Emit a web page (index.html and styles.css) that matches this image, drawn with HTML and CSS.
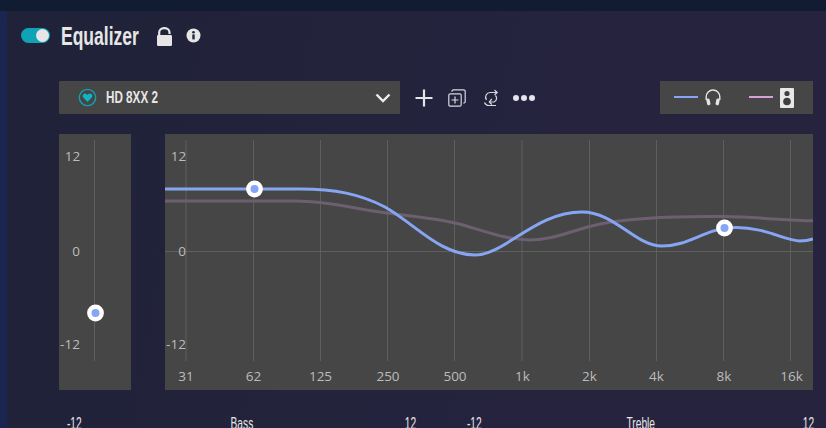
FILE: index.html
```html
<!DOCTYPE html>
<html lang="en">
<head>
    <meta charset="UTF-8">
    <meta name="viewport" content="width=device-width, initial-scale=1.0">
    <title>Equalizer</title>
    <link rel="stylesheet" href="styles.css">
</head>
<body>
    <div class="topbar"></div>
    <div class="page">
        <div class="header">
            <div class="toggle"><span class="toggle-knob"></span></div>
            <h1 class="title">Equalizer</h1>
            <svg class="lock-icon" width="17" height="19" viewBox="0 0 17 19">
                <path d="M3.200 9V5.500a5 4.300 0 0 1 10.300 0V7" fill="none" stroke="#e6e6e6" stroke-width="2.200"/>
                <rect x="1" y="8" width="15" height="11" rx="1.200" fill="#e6e6e6"/>
            </svg>
            <svg class="info-icon" width="15" height="15" viewBox="0 0 15 15">
                <circle cx="7.500" cy="7.500" r="7" fill="#e6e6e6"/>
                <rect x="6.300" y="6.400" width="2.400" height="5" fill="#24243c"/>
                <circle cx="7.500" cy="4.200" r="1.300" fill="#24243c"/>
            </svg>
        </div>

        <div class="toolbar">
            <div class="select">
                <svg class="heart-icon" width="19" height="19" viewBox="0 0 19 19">
                    <circle cx="9.500" cy="9.500" r="8.200" fill="none" stroke="#11a3b5" stroke-width="1.300"/>
                    <path d="M9.500 14 5.300 9.600a2.500 2.500 0 0 1 0-3.300 2.600 2.600 0 0 1 3.500 0l.7.7.7-.7a2.600 2.600 0 0 1 3.500 0 2.500 2.500 0 0 1 0 3.300z" fill="#11b3c6"/>
                </svg>
                <span class="select-label">HD 8XX 2</span>
                <svg class="chevron" width="16" height="10" viewBox="0 0 16 10">
                    <path d="M1.500 1.500 8 8l6.500-6.500" fill="none" stroke="#ececec" stroke-width="2.400"/>
                </svg>
            </div>
            <div class="actions">
                <svg width="18" height="18" viewBox="0 0 18 18">
                    <path d="M9 0.500v17M0.500 9h17" stroke="#e4e4ea" stroke-width="2.200" fill="none"/>
                </svg>
                <svg width="18" height="18" viewBox="0 0 18 18" fill="none" stroke="#d8d8e0" stroke-width="1.200">
                    <rect x="0.800" y="4.800" width="12.400" height="12.400" rx="1.500"/>
                    <path d="M4 2.800V2.300A1.500 1.500 0 0 1 5.500 0.800h10A1.700 1.700 0 0 1 17.200 2.500v10a1.500 1.500 0 0 1-1.500 1.500h-.5"/>
                    <path d="M7 7.500v7M3.500 11h7"/>
                </svg>
                <svg class="sync-icon" width="16" height="18" viewBox="0 0 16 18" fill="none" stroke="#d8d8e0" stroke-width="1.200">
                    <path d="M14 3.500H7.500a4.700 4.700 0 0 0-4 7.500"/>
                    <path d="M11.500 1l2.700 2.500-2.700 2.500"/>
                    <path d="M12.500 6.500a4 4 0 0 1-1.500 6.500H6.500"/>
                    <path d="M8.800 10L6.300 13l2.500 2.500"/>
                    <path d="M1.500 13.500c.8 2 2.300 3 4.500 3h7"/>
                </svg>
                <div class="dots"><span></span><span></span><span></span></div>
            </div>
            <div class="legend">
                <span class="legend-line legend-blue"></span>
                <svg width="16" height="17" viewBox="0 0 16 17" fill="none">
                    <path d="M1.200 11V8a6.800 7 0 0 1 13.600 0v3" stroke="#e4e4e4" stroke-width="1.400"/>
                    <rect x="1.700" y="9.500" width="3.400" height="6.800" rx="1.600" fill="#e4e4e4" transform="rotate(-12 3.400 13)"/>
                    <rect x="10.900" y="9.500" width="3.400" height="6.800" rx="1.600" fill="#e4e4e4" transform="rotate(12 12.600 13)"/>
                </svg>
                <span class="legend-line legend-pink"></span>
                <svg width="14" height="20" viewBox="0 0 14 20">
                    <rect width="14" height="20" rx="1" fill="#e8e8e8"/>
                    <circle cx="7" cy="5.500" r="2.600" fill="#3f3f3f"/>
                    <circle cx="7" cy="13.500" r="3.800" fill="#3f3f3f"/>
                </svg>
            </div>
        </div>

        <div class="graphs">
            <div class="panel panel-gain">
                <svg class="graph" width="72" height="256" viewBox="59 134 72 256">
                    <line class="grid" x1="94.500" y1="140" x2="94.500" y2="361"/>
                    <text class="axis" x="72.500" y="161" text-anchor="middle">12</text>
                    <text class="axis" x="76" y="256" text-anchor="middle">0</text>
                    <text class="axis" x="70" y="349" text-anchor="middle">-12</text>
                    <circle class="handle" cx="95.500" cy="313" r="6.200"/>
                </svg>
            </div>
            <div class="panel panel-curve">
                <svg class="graph" width="648" height="256" viewBox="165 134 648 256">
                    <line class="grid" x1="186" y1="140" x2="186" y2="361"/>
                    <line class="grid" x1="253.500" y1="140" x2="253.500" y2="361"/>
                    <line class="grid" x1="320.500" y1="140" x2="320.500" y2="361"/>
                    <line class="grid" x1="387.500" y1="140" x2="387.500" y2="361"/>
                    <line class="grid" x1="454.500" y1="140" x2="454.500" y2="361"/>
                    <line class="grid" x1="522" y1="140" x2="522" y2="361"/>
                    <line class="grid" x1="589.500" y1="140" x2="589.500" y2="361"/>
                    <line class="grid" x1="656.500" y1="140" x2="656.500" y2="361"/>
                    <line class="grid" x1="723.500" y1="140" x2="723.500" y2="361"/>
                    <line class="grid" x1="790.500" y1="140" x2="790.500" y2="361"/>
                    <line class="grid" x1="165" y1="251.500" x2="813" y2="251.500"/>

                    <text class="axis" x="178.500" y="161" text-anchor="middle">12</text>
                    <text class="axis" x="182" y="256" text-anchor="middle">0</text>
                    <text class="axis" x="176" y="349" text-anchor="middle">-12</text>

                    <text class="axis" x="186" y="381" text-anchor="middle">31</text>
                    <text class="axis" x="253.500" y="381" text-anchor="middle">62</text>
                    <text class="axis" x="320.500" y="381" text-anchor="middle">125</text>
                    <text class="axis" x="388" y="381" text-anchor="middle">250</text>
                    <text class="axis" x="455" y="381" text-anchor="middle">500</text>
                    <text class="axis" x="522.500" y="381" text-anchor="middle">1k</text>
                    <text class="axis" x="589.500" y="381" text-anchor="middle">2k</text>
                    <text class="axis" x="656.500" y="381" text-anchor="middle">4k</text>
                    <text class="axis" x="724" y="381" text-anchor="middle">8k</text>
                    <text class="axis" x="791.500" y="381" text-anchor="middle">16k</text>

                    <path class="curve-pink" d="M165 201H295C330 201 360 210 387 213C420 217 440 219 455 223C480 229 505 240 530 240C555 240 575 229 600 224C630 218 680 216 724 216.500C760 217 790 221 813 220.800"/>
                    <path class="curve-blue" d="M165 189H300C335 189 360 194 385 207C415 224 440 255 475 255C505 255 535 212 582 212C615 212 635 246 662 246C690 246 705 228 735 227.500C765 227 785 241 800 241C806 241 810 240 813 239"/>
                    <circle class="handle" cx="254.500" cy="189" r="6.200"/>
                    <circle class="handle" cx="724.500" cy="228" r="6.200"/>
                </svg>
            </div>
        </div>

        <div class="sliders">
            <div class="slider-labels slider-bass"><span>-12</span><span class="slider-name">Bass</span><span>12</span></div>
            <div class="slider-labels slider-treble"><span>-12</span><span class="slider-name">Treble</span><span>12</span></div>
        </div>
    </div>
</body>
</html>
```

FILE: styles.css
```css
html, body {
    height: 428px;
    overflow: hidden;
}
body {
    margin: 0;
    background: #25233f;
    font-family: 'Liberation Sans', sans-serif;
    color: #e6e6e6;
}
.topbar {
    height: 11px;
    background: #111b32;
}
.page {
    height: 417px;
    box-sizing: border-box;
    padding-right: 13px;
    border-left: 7px solid #1b2650;
    background: linear-gradient(100deg, #1f2238, #23233c 40%, #26233f 80%);
}
.header {
    display: flex;
    align-items: center;
    height: 48px;
    padding-left: 14px;
}
.toggle {
    display: flex;
    align-items: center;
    justify-content: flex-end;
    width: 29px;
    height: 15px;
    box-sizing: border-box;
    padding-right: 1px;
    border-radius: 8px;
    background: #10a3b5;
}
.toggle-knob {
    width: 13px;
    height: 13px;
    border-radius: 50%;
    background: #e6e6e6;
}
/* no condensed family installed, so the narrow labels are squeezed */
.title {
    flex-shrink: 0;
    width: 84px;
    margin: 2px 0 0 11px;
    font-size: 25px;
    font-weight: 700;
    line-height: 30px;
    white-space: nowrap;
    transform: scaleX(0.7);
    transform-origin: left center;
}
.lock-icon {
    margin: 3px 0 0 11px;
}
.info-icon {
    margin: 0 0 0 13px;
}
.toolbar {
    display: flex;
    align-items: center;
    height: 33px;
    margin: 22px 0 0 52px;
}
.select {
    display: flex;
    align-items: center;
    width: 341px;
    height: 33px;
    box-sizing: border-box;
    padding: 0 9px 0 19px;
    border-radius: 1px;
    background: #464646;
}
.select-label {
    flex: 1;
    margin-left: 9px;
    font-size: 16px;
    font-weight: 700;
    transform: scaleX(0.73);
    transform-origin: left center;
}
.actions {
    display: flex;
    align-items: center;
    gap: 15px;
    margin-left: 15px;
}
.sync-icon {
    margin-left: 2px;
}
.dots {
    display: flex;
    gap: 2px;
    margin-left: -1px;
}
.dots span {
    width: 6px;
    height: 6px;
    border-radius: 50%;
    background: #e4e4ea;
}
.legend {
    display: flex;
    align-items: center;
    width: 153px;
    height: 33px;
    box-sizing: border-box;
    margin-left: auto;
    padding-left: 14px;
    background: #464646;
}
.legend svg:first-of-type {
    margin: 0 28px 0 7px;
}
.legend svg:last-of-type {
    margin-left: 7px;
}
.legend-line {
    width: 24px;
    height: 2px;
    margin-top: -1px;
}
.legend-blue {
    background: #86a5f5;
}
.legend-pink {
    background: #d9a0d8;
}
.graphs {
    display: flex;
    gap: 34px;
    margin: 20px 0 0 52px;
}
.panel {
    height: 256px;
    background: #464646;
}
.panel-gain {
    width: 72px;
}
.panel-curve {
    flex: 1;
}
.graph {
    display: block;
}
.grid {
    stroke: #5f5f5f;
    stroke-width: 1;
}
.axis {
    fill: #bcbcbc;
    font-family: 'Open Sans', sans-serif;
    font-size: 13.500px;
}
.curve-blue {
    fill: none;
    stroke: #86a5f2;
    stroke-width: 3;
}
.curve-pink {
    fill: none;
    stroke: #6d5f70;
    stroke-width: 3;
}
.handle {
    fill: #86a5f5;
    stroke: #ffffff;
    stroke-width: 4.400;
}
.sliders {
    display: flex;
    margin: 25px 0 0 55px;
    font-size: 17px;
    line-height: 18px;
}
.slider-labels {
    display: flex;
    flex-shrink: 0;
    justify-content: space-between;
}
.slider-labels span {
    transform: scaleX(0.6);
}
.slider-name {
    margin-right: 4px;
}
.slider-bass {
    width: 358px;
}
.slider-treble {
    width: 356px;
    margin-left: 42px;
}
```
